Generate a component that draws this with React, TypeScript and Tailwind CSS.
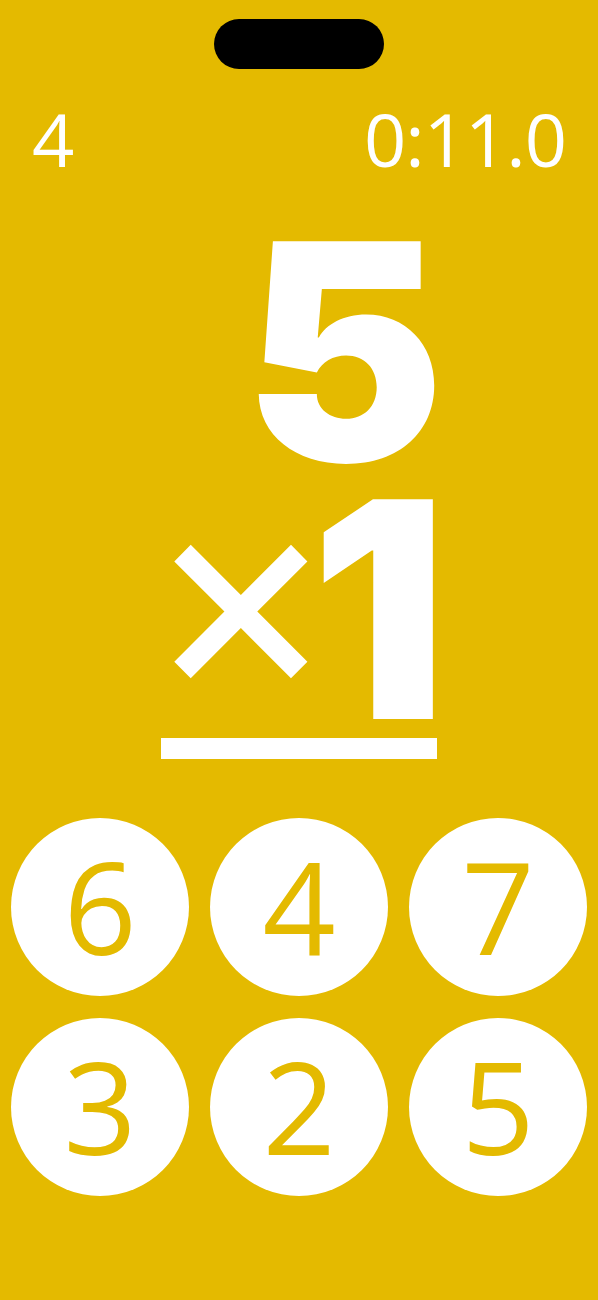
import React from "react";

export default function App() {
  const answers = [6, 4, 7, 3, 2, 5];
  return (
    <div
      className="w-[598px] h-[1300px] bg-[#E4BA00] flex flex-col items-center overflow-hidden"
      style={{ fontFamily: '"Open Sans", sans-serif' }}
    >
      <div className="mt-[19px] w-[170px] h-[50px] rounded-full bg-black" />
      <div className="w-full flex justify-between items-start px-[32px] mt-[33px] text-white text-[74px] leading-[74px]">
        <span>4</span>
        <span className="tracking-[-1px]">0:11.0</span>
      </div>
      <div
        className="mt-[46px] w-[276px] flex flex-col items-end text-white"
        style={{ fontFamily: "Inter, sans-serif" }}
      >
        <div className="text-[302px] font-black leading-[258px] tracking-tight">5</div>
        <div className="flex items-center h-[258px] leading-[258px] mr-[-10px]">
          <span className="text-[290px] font-normal leading-[258px] mr-[-26px] mb-[40px]">×</span>
          <span className="text-[302px] font-black leading-[258px]">1</span>
        </div>
        <div className="w-[276px] h-[21px] bg-white" />
      </div>
      <div className="mt-[59px] grid grid-cols-3 gap-x-[21px] gap-y-[22px]">
        {answers.map((n) => (
          <div
            key={n}
            className="w-[178px] h-[178px] rounded-full bg-white flex items-center justify-center text-[#E4BA00] text-[128px] leading-none"
          >
            <span className="mb-[2px]">{n}</span>
          </div>
        ))}
      </div>
    </div>
  );
}
